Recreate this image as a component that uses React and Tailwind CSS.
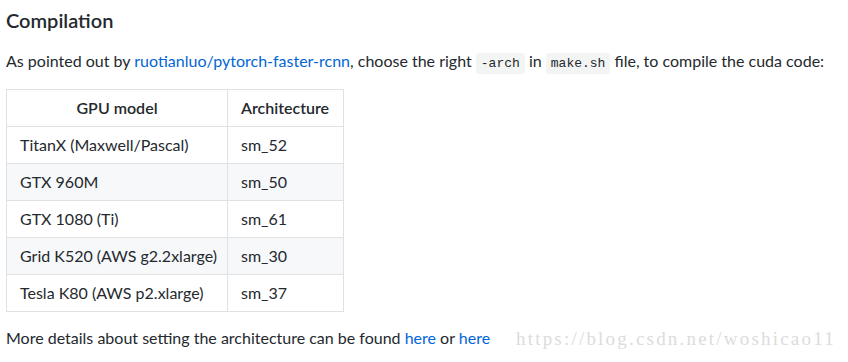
import React from "react";

const rows = [
  ["TitanX (Maxwell/Pascal)", "sm_52"],
  ["GTX 960M", "sm_50"],
  ["GTX 1080 (Ti)", "sm_61"],
  ["Grid K520 (AWS g2.2xlarge)", "sm_30"],
  ["Tesla K80 (AWS p2.xlarge)", "sm_37"],
];

function Code({ children }) {
  return (
    <code className="rounded-[3px] bg-[#f3f4f4] px-[5px] py-[3px] text-[13px] font-['Liberation_Mono',monospace] text-[#24292e]">
      {children}
    </code>
  );
}

export default function App() {
  return (
    <div className="relative h-[362px] w-[848px] overflow-hidden bg-white px-[6px] font-['Lato',sans-serif] text-[16px] text-[#24292e]">
      <h3 className="pt-[5px] text-[20px] font-semibold leading-[30px]">Compilation</h3>
      <p className="mt-[14px] whitespace-nowrap leading-[24px]">
        As pointed out by <a className="text-[#0366d6]">ruotianluo/pytorch-faster-rcnn</a>, choose the right{" "}
        <Code>-arch</Code> in <Code>make.sh</Code> file, to compile the cuda code:
      </p>
      <table className="mt-[13px] w-[337px] table-fixed border-collapse">
        <thead>
          <tr>
            <th className="h-[37px] w-[221px] border border-[#dfe2e5] px-[13px] text-center font-semibold">GPU model</th>
            <th className="h-[37px] w-[116px] border border-[#dfe2e5] px-[13px] text-left font-semibold">Architecture</th>
          </tr>
        </thead>
        <tbody>
          {rows.map((r, i) => (
            <tr key={i} className={i % 2 === 1 ? "bg-[#f6f8fa]" : "bg-white"}>
              <td className="h-[37px] whitespace-nowrap border border-[#dfe2e5] px-[13px]">{r[0]}</td>
              <td className="h-[37px] border border-[#dfe2e5] px-[13px]">{r[1]}</td>
            </tr>
          ))}
        </tbody>
      </table>
      <p className="mt-[14px] leading-[24px]">
        More details about setting the architecture can be found <a className="text-[#0366d6]">here</a> or{" "}
        <a className="text-[#0366d6]">here</a>
      </p>
      <div className="absolute left-[516px] top-[325px] font-['Liberation_Serif',serif] text-[19px] tracking-[2.2px] text-[#dcdcdc]">
        https://blog.csdn.net/woshicao11
      </div>
    </div>
  );
}
